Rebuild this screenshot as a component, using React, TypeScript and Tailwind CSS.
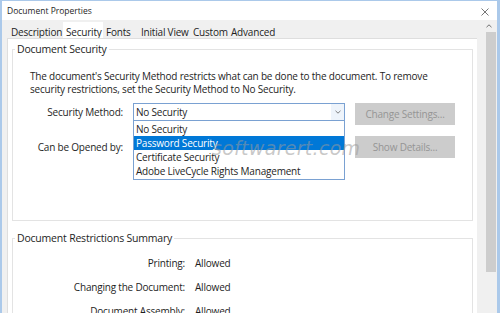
import React from 'react'

// Acrobat "Document Properties" dialog, Security tab, with the Security Method list open.
const tabs = [
  { t: 'Description', w: 'w-[55px]' },
  { t: 'Security', w: 'w-[40px]', on: true },
  { t: 'Fonts', w: 'w-[35px]' },
  { t: 'Initial View', w: 'w-[52px]' },
  { t: 'Custom', w: 'w-[38px]' },
  { t: 'Advanced', w: 'w-[48px]' },
]

const methods = ['No Security', 'Password Security', 'Certificate Security', 'Adobe LiveCycle Rights Management']

const summary = [
  { k: 'Printing:', v: 'Allowed' },
  { k: 'Changing the Document:', v: 'Allowed' },
  { k: 'Document Assembly:', v: 'Allowed' },
]

export default function App() {
  return (
    <div className="relative flex h-[313px] w-[500px] flex-col overflow-hidden border-x-2 border-r-[3px] border-t border-[#abc9ea] bg-[#f0f0f0] font-['Open_Sans',sans-serif] text-[10px] tracking-[-0.2px] text-[#1e1e1e]">
      {/* title bar */}
      <div className="flex h-[19px] shrink-0 items-center justify-between bg-white pl-[5px] pr-[8px] pt-[2px]">
        <span className="text-[8.5px] leading-none tracking-normal">Document Properties</span>
        <svg width="8" height="8" viewBox="0 0 8 8" className="text-[#666]">
          <path d="M0.5 0.5 L7.5 7.5 M7.5 0.5 L0.5 7.5" stroke="currentColor" strokeWidth="0.9" fill="none" />
        </svg>
      </div>

      <div className="flex min-h-0 flex-1">
        <div className="flex min-w-0 flex-1 flex-col pl-[5px]">
          {/* tabs */}
          <div className="flex h-[18px] shrink-0 items-end pl-[1px] text-[10px] leading-none">
            {tabs.map((tab) => (
              <div
                key={tab.t}
                className={`${tab.w} flex shrink-0 items-center whitespace-nowrap pl-[3px] ${tab.on ? 'relative -mb-px h-[17px] bg-white pt-[2px]' : 'h-[13px]'}`}
              >
                {tab.t}
              </div>
            ))}
          </div>

          {/* page */}
          <div className="relative flex-1 border-l border-t border-[#dedede] bg-white px-[4px]">
            <fieldset className="mt-[3px] h-[179px] border border-[#e3e3e3] px-[2px]">
              <legend className="px-[2px] text-[10.5px] leading-[14px]">Document Security</legend>
              <div className="pl-[15px] pt-[14px] leading-[13px]">
                <p>The document's Security Method restricts what can be done to the document. To remove</p>
                <p>security restrictions, set the Security Method to No Security.</p>
              </div>

              <div className="mt-[7px] flex items-start">
                <span className="w-[108px] shrink-0 pt-[3px] text-right leading-[13px]">Security Method:</span>
                <div className="relative ml-[10px]">
                  <div className="flex h-[18px] w-[212px] items-center justify-between border border-[#7aa1d2] bg-white pl-[2px]">
                    <span>No Security</span>
                    <span className="flex h-full w-[13px] items-center justify-center bg-[#eef4fb]">
                      <svg width="6" height="4" viewBox="0 0 6 4">
                        <path d="M0.5 0.8 L3 3.2 L5.5 0.8" stroke="#707070" strokeWidth="0.9" fill="none" />
                      </svg>
                    </span>
                  </div>
                  <ul className="absolute left-0 top-[17px] z-10 w-[212px] border border-[#7aa1d2] bg-white py-px">
                    {methods.map((m, i) => (
                      <li key={m} className={`h-[14px] whitespace-nowrap pl-[2px] leading-[14px] ${i === 1 ? 'bg-[#0078d7] text-white' : ''}`}>
                        {m}
                      </li>
                    ))}
                  </ul>
                </div>
                <button className="ml-[10px] h-[22px] w-[100px] bg-[#cccccc] text-[#959595]">Change Settings...</button>
              </div>

              <div className="mt-[11px] flex items-center">
                <span className="w-[108px] shrink-0 text-right leading-[13px]">Can be Opened by:</span>
                <div className="ml-[10px] w-[212px]" />
                <button className="ml-[10px] h-[22px] w-[100px] bg-[#cccccc] text-[#959595]">Show Details...</button>
              </div>
            </fieldset>

            <fieldset className="mt-[10px] border border-[#e3e3e3] px-[2px] pb-[20px]">
              <legend className="px-[2px] text-[10.5px] leading-[14px]">Document Restrictions Summary</legend>
              <div className="flex flex-col gap-[11px] pt-[12px] leading-[13px]">
                {summary.map((r) => (
                  <div key={r.k} className="flex">
                    <span className="w-[170px] shrink-0 text-right">{r.k}</span>
                    <span className="ml-[10px]">{r.v}</span>
                  </div>
                ))}
              </div>
            </fieldset>

            {/* watermark */}
            <span className="pointer-events-none absolute left-[204px] top-[100px] z-20 font-['DejaVu_Sans',sans-serif] text-[19px] italic leading-none tracking-[0.3px] text-[#9a9a9a]/55">
              softwarert.com
            </span>
          </div>
        </div>

        {/* scrollbar */}
        <div className="flex w-[20px] shrink-0 flex-col">
          <div className="flex h-[12px] items-center justify-end pr-[5px]">
            <svg width="6" height="4" viewBox="0 0 6 4">
              <path d="M0.5 3.2 L3 0.8 L5.5 3.2" stroke="#606060" strokeWidth="0.9" fill="none" />
            </svg>
          </div>
          <div className="ml-[9px] h-[240px] w-[10px] bg-[#cdcdcd]" />
        </div>
      </div>
    </div>
  )
}
